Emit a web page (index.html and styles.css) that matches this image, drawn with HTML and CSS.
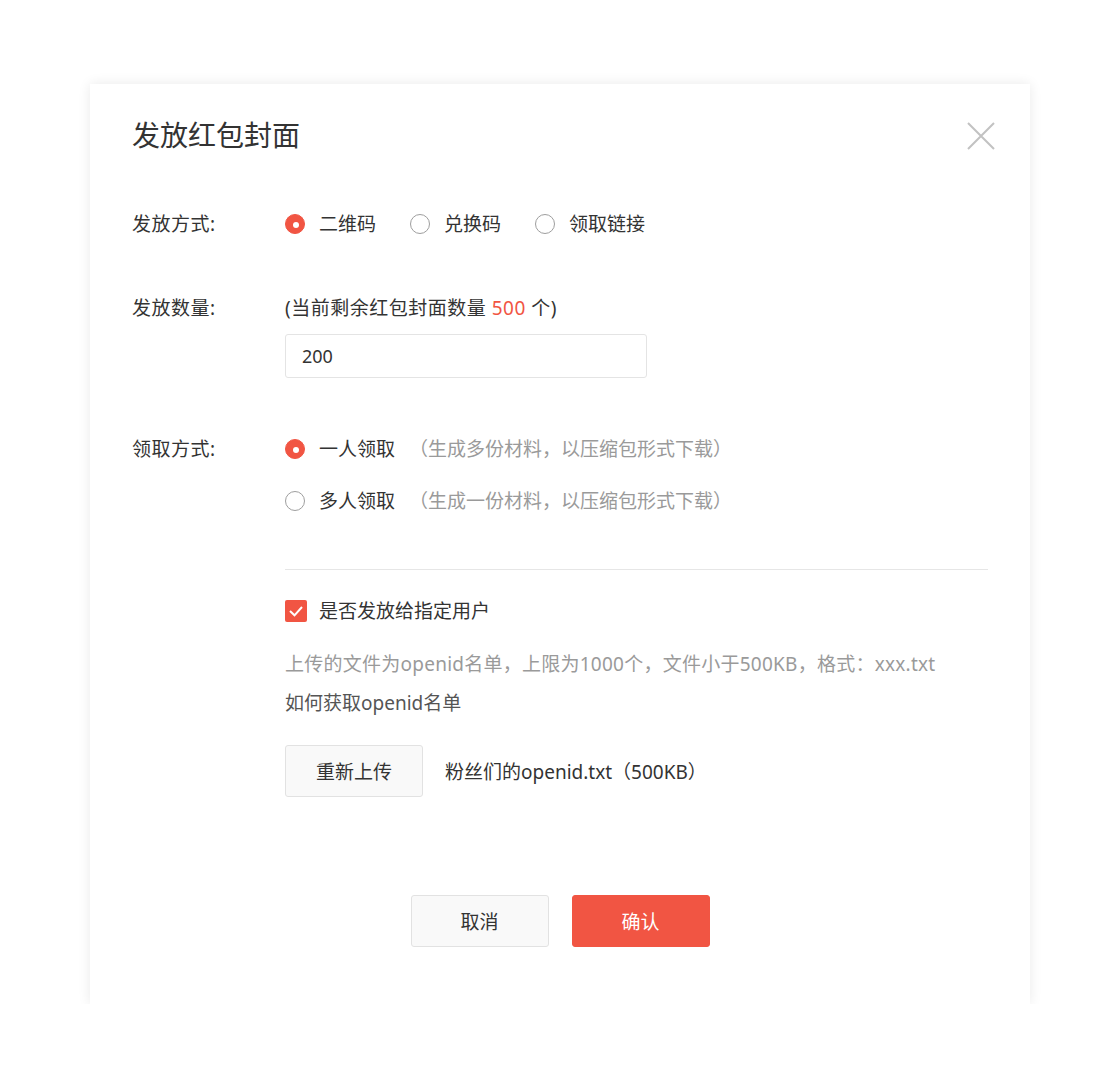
FILE: index.html
```html
<!DOCTYPE html>
<html lang="zh-CN">
<head>
  <meta charset="UTF-8">
  <title>发放红包封面</title>
  <link rel="stylesheet" href="styles.css">
</head>
<body>

<div class="dialog">
  <div class="dialog-head">
    <h2 class="title">发放红包封面</h2>
    <span class="close">
      <svg width="28" height="28" viewBox="0 0 28 28"><path d="M1 1L27 27M27 1L1 27" stroke="#c2c2c2" stroke-width="2" fill="none"/></svg>
    </span>
  </div>

  <div class="row row-mode">
    <div class="label">发放方式:</div>
    <div class="field options">
      <span class="radio checked"></span><span class="opt-text">二维码</span>
      <span class="radio"></span><span class="opt-text">兑换码</span>
      <span class="radio"></span><span class="opt-text">领取链接</span>
    </div>
  </div>

  <div class="row row-count">
    <div class="label">发放数量:</div>
    <div class="field">
      <div class="line spaced">(当前剩余红包封面数量 <span class="red">500</span> 个)</div>
      <input class="input" type="text" value="200">
    </div>
  </div>

  <div class="row row-get">
    <div class="label">领取方式:</div>
    <div class="field">
      <div class="line options">
        <span class="radio checked"></span><span class="opt-text tight">一人领取</span>
        <span class="hint">（生成多份材料，以压缩包形式下载）</span>
      </div>
      <div class="line options second">
        <span class="radio"></span><span class="opt-text tight">多人领取</span>
        <span class="hint">（生成一份材料，以压缩包形式下载）</span>
      </div>
    </div>
  </div>

  <div class="indent">
    <div class="divider"></div>

    <div class="line options check-row">
      <span class="checkbox">
        <svg width="22" height="22" viewBox="0 0 22 22"><path d="M5 11L9.5 15.3L17 7" stroke="#fff" stroke-width="2" fill="none"/></svg>
      </span>
      <span class="opt-text">是否发放给指定用户</span>
    </div>

    <div class="desc">
      <div class="hint-line">上传的文件为openid名单，上限为1000个，文件小于500KB，格式：xxx.txt</div>
      <div class="link-line">如何获取openid名单</div>
    </div>

    <div class="upload">
      <button class="btn">重新上传</button>
      <span class="file">粉丝们的openid.txt（500KB）</span>
    </div>
  </div>

  <div class="footer">
    <button class="btn btn-big">取消</button>
    <button class="btn btn-big btn-primary">确认</button>
  </div>
</div>

</body>
</html>
```

FILE: styles.css
```css
body {
  margin: 0;
  background: #fff;
  font-family: "Noto Sans", "Noto Sans CJK SC", sans-serif;
  color: #333;
}
.dialog {
  width: 940px;
  margin: 84px 0 0 90px;
  padding: 33px 0 57px 0;
  background: #fff;
  box-shadow: 0 0 12px rgba(0,0,0,0.09);
  box-sizing: border-box;
}
.dialog-head {
  display: flex;
  align-items: center;
  justify-content: space-between;
  padding: 0 35px 0 42px;
  height: 36px;
}
.title {
  margin: 0;
  font-size: 28px;
  font-weight: normal;
  line-height: 36px;
  color: #333;
}
.close {
  display: flex;
  margin-top: 2px;
}
.row {
  display: flex;
  padding-left: 42px;
  font-size: 19px;
}
.label {
  width: 153px;
  line-height: 28px;
  color: #333;
  letter-spacing: 0.5px;
}
.field {
  flex: 1;
}
.line {
  line-height: 28px;
  height: 28px;
}
.spaced {
  letter-spacing: 0.5px;
}
.options {
  display: flex;
  align-items: center;
  line-height: 28px;
  font-size: 19px;
}
.row-mode {
  margin-top: 57px;
}
.row-count {
  margin-top: 56px;
}
.row-get {
  margin-top: 57px;
}
.second {
  margin-top: 24px;
}
.radio {
  width: 20px;
  height: 20px;
  border: 1px solid #9e9e9e;
  border-radius: 50%;
  box-sizing: border-box;
  margin-right: 14px;
  background: #fff;
  position: relative;
}
.radio.checked {
  border-color: #f15543;
  background: #f15543;
}
.radio.checked::after {
  content: "";
  position: absolute;
  left: 7px;
  top: 7px;
  width: 6px;
  height: 6px;
  border-radius: 50%;
  background: #fff;
}
.opt-text {
  margin-right: 34px;
  color: #333;
}
.opt-text.tight {
  margin-right: 14px;
}
.hint {
  color: #9a9a9a;
}
.red {
  color: #f15543;
}
.input {
  display: block;
  margin-top: 12px;
  width: 362px;
  height: 44px;
  border: 1px solid #e4e4e4;
  border-radius: 3px;
  padding: 0 16px;
  box-sizing: border-box;
  font-family: "Noto Sans", "Noto Sans CJK SC", sans-serif;
  font-size: 18px;
  color: #333;
  outline: none;
}
.indent {
  padding-left: 195px;
  padding-right: 42px;
  font-size: 19px;
}
.divider {
  margin-top: 54px;
  height: 1px;
  background: #e6e6e6;
}
.check-row {
  margin-top: 27px;
}
.checkbox {
  width: 22px;
  height: 22px;
  background: #f15543;
  border-radius: 2px;
  margin-right: 12px;
  display: flex;
}
.desc {
  margin-top: 20px;
  line-height: 39px;
}
.hint-line {
  color: #9a9a9a;
  letter-spacing: 0.25px;
}
.link-line {
  color: #555;
}
.upload {
  margin-top: 22px;
  display: flex;
  align-items: center;
}
.btn {
  width: 138px;
  height: 52px;
  border: 1px solid #e2e2e2;
  border-radius: 3px;
  background: #f9f9f9;
  font-family: "Noto Sans", "Noto Sans CJK SC", sans-serif;
  font-size: 19px;
  color: #333;
  cursor: pointer;
}
.file {
  margin-left: 22px;
  color: #333;
}
.footer {
  margin-top: 98px;
  display: flex;
  justify-content: center;
  gap: 23px;
}
.btn-primary {
  background: #f15543;
  border-color: #f15543;
  color: #fff;
}
```
